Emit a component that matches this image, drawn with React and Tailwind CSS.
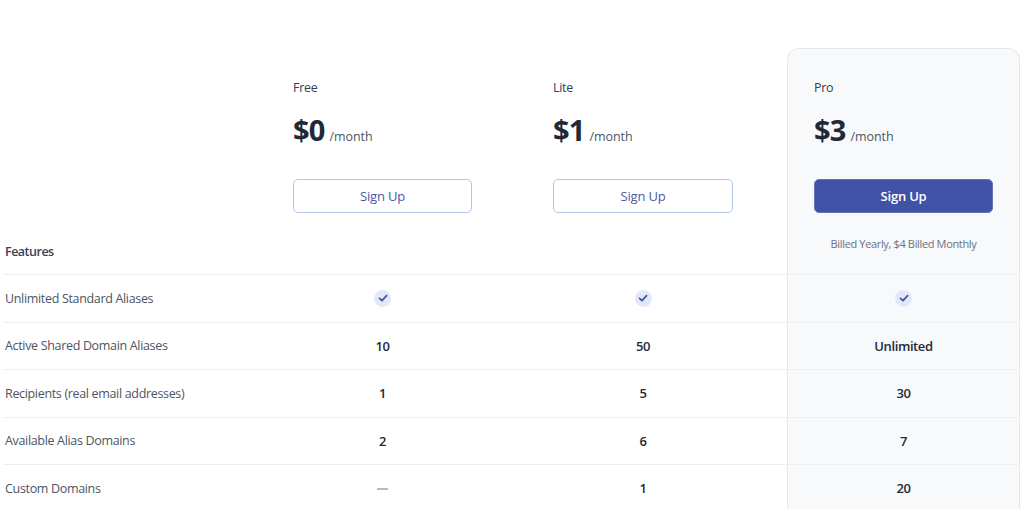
const PLANS = [
  { name: 'Free', price: '$0', highlight: false },
  { name: 'Lite', price: '$1', highlight: false },
  { name: 'Pro', price: '$3', highlight: true },
]

const ROWS = [
  { label: 'Unlimited Standard Aliases', values: ['check', 'check', 'check'] },
  { label: 'Active Shared Domain Aliases', values: ['10', '50', 'Unlimited'] },
  { label: 'Recipients (real email addresses)', values: ['1', '5', '30'] },
  { label: 'Available Alias Domains', values: ['2', '6', '7'] },
  { label: 'Custom Domains', values: ['dash', '1', '20'] },
]

function CheckBadge() {
  return (
    <span className="flex h-[17px] w-[17px] items-center justify-center rounded-full bg-[#e3e8f8]">
      <svg width="10" height="10" viewBox="0 0 10 10" fill="none">
        <path d="M1.5 5.4 L4 7.6 L8.6 2.6" stroke="#3f52a6" strokeWidth="1.7" strokeLinecap="round" strokeLinejoin="round" />
      </svg>
    </span>
  )
}

function PlanHeader({ plan }) {
  const boxClass = plan.highlight
    ? 'rounded-t-xl border-x border-t border-[#e5e7eb] bg-[#f8f9fb] px-[26px] pt-[30px]'
    : 'px-[27px] pt-[31px]'
  const btnClass = plan.highlight
    ? 'border-[#6474bb] bg-[#3f52a6] font-semibold text-white'
    : 'border-[#b4c3ec] bg-white font-medium text-[#4a5aa5]'

  return (
    <div className={`flex h-[226px] flex-col ${boxClass}`}>
      <div className="text-[12.5px] leading-[18px] tracking-[-0.3px] text-[#374151]">{plan.name}</div>
      <div className="mt-[13px] flex h-[40px] items-baseline">
        <span className="text-[29px] leading-[40px] font-bold tracking-[-0.8px] text-[#1f2937]">{plan.price}</span>
        <span className="ml-[5px] text-[12.5px] tracking-[-0.1px] text-[#4b5563]">/month</span>
      </div>
      <button className={`mt-[29px] h-[34px] w-full rounded-[5px] border pt-px text-[13px] tracking-[-0.2px] ${btnClass}`}>Sign Up</button>
      {plan.highlight && (
        <p className="mt-[23px] text-center text-[11px] leading-[16px] tracking-[-0.35px] text-[#6b7280]">Billed Yearly, $4 Billed Monthly</p>
      )}
    </div>
  )
}

function Cell({ value }) {
  if (value === 'check') return <CheckBadge />
  if (value === 'dash') return <span className="mt-px h-[2px] w-[11px] bg-[#b5bac4]" />
  return <span className="pt-px text-[13px] font-semibold tracking-[-0.4px] text-[#1f2937]">{value}</span>
}

export default function App() {
  return (
    <div className="h-[509px] overflow-hidden bg-white px-1 pt-[48px] font-['Open_Sans',sans-serif]">
      <div className="grid w-[1016px] grid-cols-[235px_233px_234px_233px] gap-x-[27px]">
        <div className="flex h-[226px] items-end pb-[12px] pl-px text-[12.5px] font-semibold tracking-[-0.5px] text-[#374151]">Features</div>
        {PLANS.map((plan) => (
          <PlanHeader key={plan.name} plan={plan} />
        ))}
      </div>

      {ROWS.map((row) => (
        <div key={row.label} className="grid h-[47.5px] w-[1016px] grid-cols-[235px_233px_234px_233px] gap-x-[27px] border-t border-[#eceef1]">
          <div className="flex items-center pl-px pt-[2px] text-[12.5px] tracking-[-0.33px] text-[#4b5563]">{row.label}</div>
          {row.values.map((value, i) => (
            <div
              key={i}
              className={`flex items-center justify-center ${PLANS[i].highlight ? 'border-x border-[#e5e7eb] bg-[#f8f9fb]' : ''}`}
            >
              <Cell value={value} />
            </div>
          ))}
        </div>
      ))}
    </div>
  )
}
